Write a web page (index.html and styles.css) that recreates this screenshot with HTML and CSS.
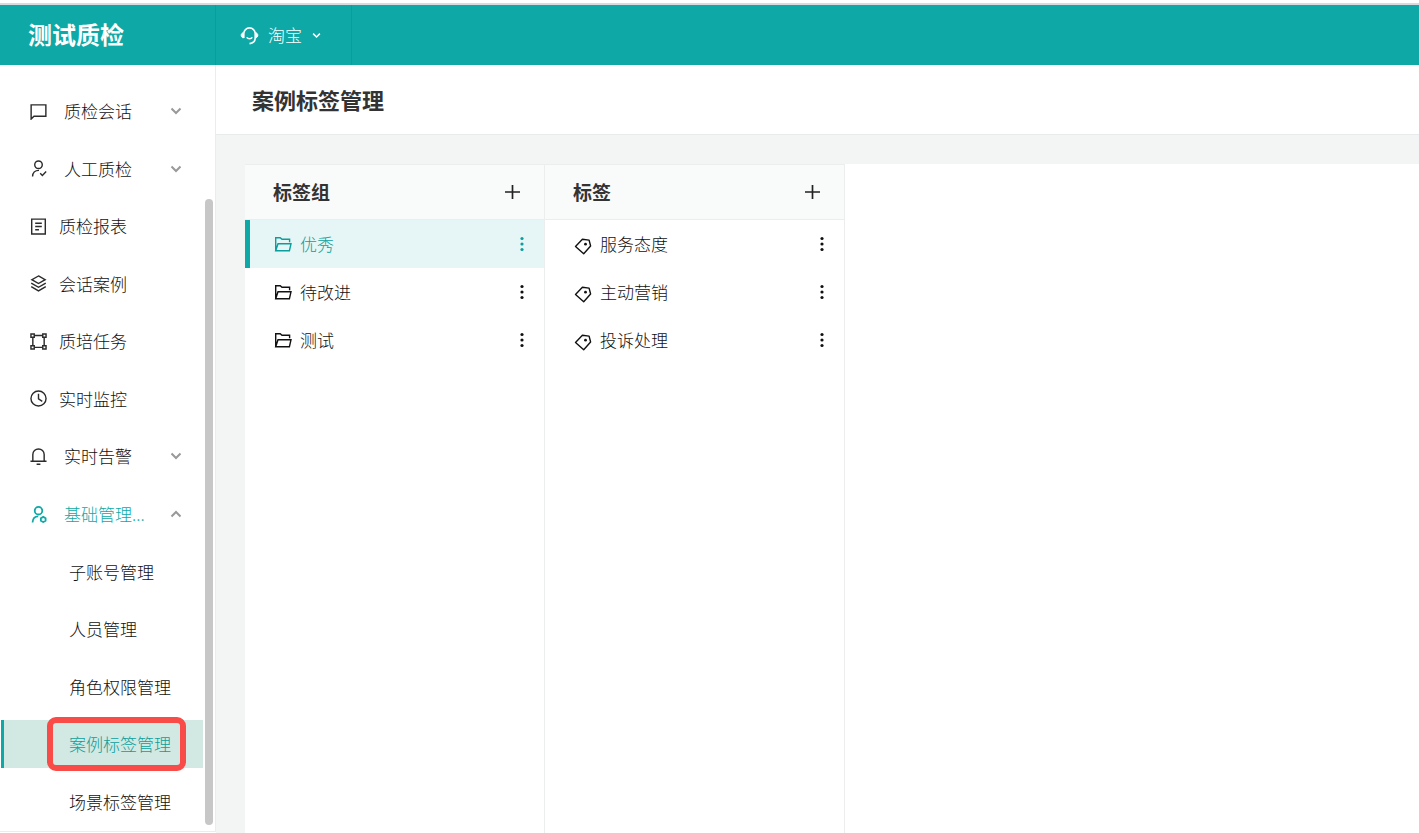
FILE: index.html
```html
<!DOCTYPE html>
<html lang="zh-CN">
<head>
<meta charset="utf-8">
<meta name="viewport" content="width=device-width, initial-scale=1">
<title>案例标签管理</title>
<link rel="stylesheet" href="styles.css">
</head>
<body>
<svg class="sprite" aria-hidden="true">
  <symbol id="chevron" viewBox="0 0 12 12"><path d="M1.500 3.500 6 8l4.500-4.500" fill="none" stroke="currentColor" stroke-width="2"/></symbol>
  <symbol id="folder" viewBox="0 0 18 18"><path d="M1.700 15.800V2.700h4.500l1.800 1.600h7.600v3M1.700 15.800 4 8.700h13l-1.600 7.100z" fill="none" stroke="currentColor" stroke-width="1.400"/></symbol>
  <symbol id="tag" viewBox="0 0 18 18"><path d="M1.500 9.500 8.400 2.300l6.700.8 1.500 5.900-6.900 7.700z" fill="none" stroke="currentColor" stroke-width="1.400" stroke-linejoin="round"/><circle cx="11.500" cy="7.200" r="1.400" fill="currentColor"/></symbol>
  <symbol id="dots" viewBox="0 0 4 16"><g fill="currentColor"><circle cx="2" cy="2.500" r="1.600"/><circle cx="2" cy="8" r="1.600"/><circle cx="2" cy="13.500" r="1.600"/></g></symbol>
  <symbol id="plus" viewBox="0 0 16 16"><path d="M8.500 1v14M1 8h15" stroke="currentColor" stroke-width="1.700"/></symbol>
</svg>
<header class="topbar">
  <div class="brand">测试质检</div>
  <button class="platform" type="button">
    <svg class="platform-icon" viewBox="0 0 20 20" fill="none" stroke="currentColor"><path d="M4 12.500V8a6 6 0 0 1 12 0v5c0 3-2 5-6 5.500" stroke-width="1.700"/><path d="M3.500 7v5.500C.5 12 .5 7.500 3.500 7zM16.500 7v5.500c3-.5 3-5 0-5.500z" fill="currentColor" stroke-width="1"/><path d="M7 12c1.500 2 4.500 2 6 0" stroke-width="1.500"/></svg>
    <span>淘宝</span>
    <svg class="platform-caret"><use href="#chevron"/></svg>
  </button>
</header>
<div class="layout">
  <aside class="sidebar">
    <nav class="nav">
      <a class="nav-item wide" href="#"><svg class="nav-icon" viewBox="0 0 18 18"><path d="M1.200 17V2h15.600v12H4.200z"/></svg><span>质检会话</span><svg class="caret"><use href="#chevron"/></svg></a>
      <a class="nav-item wide" href="#"><svg class="nav-icon" viewBox="0 0 18 18"><circle cx="9" cy="5" r="4"/><path d="M2.700 17.500c.2-4 2.700-6.500 6.800-6.500M10.800 14l2.300 2.300 4-4"/></svg><span>人工质检</span><svg class="caret"><use href="#chevron"/></svg></a>
      <a class="nav-item" href="#"><svg class="nav-icon" viewBox="0 0 18 18"><path d="M1.800 1.200h14.400v15.800H1.800zM5.500 5.500h7M5.500 9h7M5.500 12.500h4"/></svg><span>质检报表</span></a>
      <a class="nav-item" href="#"><svg class="nav-icon" viewBox="0 0 18 18"><path d="M9 1l7 4-7 4-7-4zM1.300 8.500 9 13l7.700-4.500M1.300 12.300 9 16.800l7.700-4.500"/></svg><span>会话案例</span></a>
      <a class="nav-item" href="#"><svg class="nav-icon" viewBox="0 0 18 18"><path d="M1 1h3.500v3.500H1zM13.500 1H17v3.500h-3.500zM1 13.500h3.500V17H1zM13.500 13.500H17V17h-3.500zM4.500 2.700h9M4.500 15.200h9M3 4.500v9M15 4.500v9"/></svg><span>质培任务</span></a>
      <a class="nav-item" href="#"><svg class="nav-icon" viewBox="0 0 18 18"><circle cx="9" cy="9" r="8"/><path d="M9 4v5.500l4 2.500"/></svg><span>实时监控</span></a>
      <a class="nav-item wide" href="#"><svg class="nav-icon" viewBox="0 0 18 18"><path d="M3 14V7a6 6 0 0 1 12 0v7M.5 14h17M7 17.200h4"/></svg><span>实时告警</span><svg class="caret"><use href="#chevron"/></svg></a>
      <a class="nav-item wide current" href="#"><svg class="nav-icon bold" viewBox="0 0 18 18"><circle cx="9" cy="5" r="4"/><path d="M2.700 17.500c.2-4 2.300-6.500 6-6.500"/><path d="M14 11.500l2.500 1.500v2.700L14 17l-2.500-1.300V13z"/></svg><span>基础管理...</span><svg class="caret up"><use href="#chevron"/></svg></a>
      <a class="nav-item sub" href="#">子账号管理</a>
      <a class="nav-item sub" href="#">人员管理</a>
      <a class="nav-item sub" href="#">角色权限管理</a>
      <a class="nav-item sub active" href="#" aria-current="page">案例标签管理</a>
      <a class="nav-item sub" href="#">场景标签管理</a>
    </nav>
    <div class="scroll-thumb"></div>
  </aside>
  <main class="main">
    <div class="page-head"><h1>案例标签管理</h1></div>
    <div class="board">
      <section class="column">
        <div class="column-head"><h2>标签组</h2><button class="add" type="button" aria-label="添加标签组"><svg><use href="#plus"/></svg></button></div>
        <ul class="rows">
          <li class="row selected"><svg class="row-icon"><use href="#folder"/></svg><span>优秀</span><button class="more" type="button" aria-label="更多"><svg><use href="#dots"/></svg></button></li>
          <li class="row"><svg class="row-icon"><use href="#folder"/></svg><span>待改进</span><button class="more" type="button" aria-label="更多"><svg><use href="#dots"/></svg></button></li>
          <li class="row"><svg class="row-icon"><use href="#folder"/></svg><span>测试</span><button class="more" type="button" aria-label="更多"><svg><use href="#dots"/></svg></button></li>
        </ul>
      </section>
      <section class="column">
        <div class="column-head"><h2>标签</h2><button class="add" type="button" aria-label="添加标签"><svg><use href="#plus"/></svg></button></div>
        <ul class="rows tags">
          <li class="row"><svg class="row-icon"><use href="#tag"/></svg><span>服务态度</span><button class="more" type="button" aria-label="更多"><svg><use href="#dots"/></svg></button></li>
          <li class="row"><svg class="row-icon"><use href="#tag"/></svg><span>主动营销</span><button class="more" type="button" aria-label="更多"><svg><use href="#dots"/></svg></button></li>
          <li class="row"><svg class="row-icon"><use href="#tag"/></svg><span>投诉处理</span><button class="more" type="button" aria-label="更多"><svg><use href="#dots"/></svg></button></li>
        </ul>
      </section>
    </div>
  </main>
</div>
</body>
</html>
```
FILE: styles.css
```css
* { box-sizing: border-box; }

body {
  margin: 0;
  min-height: 100vh;
  display: flex;
  flex-direction: column;
  padding-top: 3px;
  background: #fff;
  color: #111;
  font-family: "Noto Sans CJK SC", sans-serif;
  font-size: 17px;
  font-weight: 300;
  line-height: 24px;
}

.sprite { display: none; }
svg { display: block; flex: none; }
h1, h2, ul { margin: 0; padding: 0; }
button {
  border: 0;
  padding: 0;
  background: none;
  color: inherit;
  font: inherit;
  cursor: pointer;
}

.topbar {
  display: flex;
  height: 62px;
  border-top: 2px solid #d9d9e0;
  background: #0ea9a6;
  color: #fff;
}
.brand {
  width: 216px;
  padding: 13px 0 0 28px;
  border-right: 1px solid #0d9c99;
  font-size: 24px;
  font-weight: 700;
  line-height: 32px;
}
.platform {
  display: flex;
  align-items: center;
  padding: 0 30px 0 24px;
  border-right: 1px solid #0d9c99;
}
.platform-icon { width: 19px; height: 19px; margin-right: 9px; }
.platform-caret { width: 9px; height: 9px; margin-left: 10px; }

.layout { display: flex; flex: 1; }

.sidebar {
  display: flex;
  width: 216px;
  margin-bottom: 1px;
  padding-left: 1px;
  border-right: 1px solid #ebeded;
  border-bottom: 1px solid #ebeded;
}
.nav {
  display: flex;
  flex: 1;
  flex-direction: column;
  justify-content: space-between;
  padding: 22px 0 5px;
}
.nav-item {
  position: relative;
  display: flex;
  align-items: center;
  height: 48px;
  padding: 0 21px 0 29px;
  color: #111;
  text-decoration: none;
}
.nav-icon {
  width: 17px;
  height: 17px;
  margin-right: 12px;
  fill: none;
  stroke: #2b2b2b;
  stroke-width: 1.5;
}
.nav-icon.bold { stroke: currentColor; stroke-width: 1.9; }
.wide .nav-icon { margin-right: 17px; }
.caret { width: 12px; height: 12px; margin-left: auto; color: #999; }
.caret.up { transform: rotate(180deg); }
.nav-item.current { color: #0ea9a6; }
.nav-item.sub { padding-left: 68px; }
.nav-item.active {
  padding-left: 65px;
  border-left: 3px solid #0ea9a6;
  background: #d2e8e2;
  color: #0a9f9c;
}
.active::after {
  content: "";
  position: absolute;
  inset: -3px 17px -3px 43px;
  border: 6px solid #f94b48;
  border-radius: 9px;
}
.scroll-thumb {
  width: 8px;
  margin: 134px 2px 6px;
  border-radius: 4px;
  background: #c7c7c7;
}

.main { display: flex; flex: 1; flex-direction: column; background: #f3f5f5; }
.page-head {
  padding: 18px 36px 19px;
  border-bottom: 1px solid #e8ebeb;
  background: #fff;
}
h1 { font-size: 22px; font-weight: 700; line-height: 32px; color: #333; }
.board {
  display: flex;
  flex: 1;
  margin: 29px 0 0 29px;
  background: #fff;
}
.column { width: 300px; border-right: 1px solid #eceeee; }
.column-head {
  display: flex;
  align-items: center;
  justify-content: space-between;
  height: 56px;
  padding: 0 24px 0 28px;
  border-top: 1px solid #eceeee;
  border-bottom: 1px solid #eceeee;
  background: #f9fbfa;
}
h2 { font-size: 19px; font-weight: 700; color: #333; }
.add svg { width: 16px; height: 16px; color: #222; }
.rows { list-style: none; }
.row {
  display: flex;
  align-items: center;
  height: 48px;
  padding: 0 20px 0 29px;
  color: #111;
}
.row-icon { width: 18px; height: 18px; margin-right: 8px; }
.tags .row-icon { margin-top: 4px; }
.more { margin-left: auto; }
.more svg { width: 4px; height: 16px; }
.selected {
  padding-left: 24px;
  border-left: 5px solid #0ea9a6;
  background: #e6f5f5;
  color: #0a9f9c;
}
```
